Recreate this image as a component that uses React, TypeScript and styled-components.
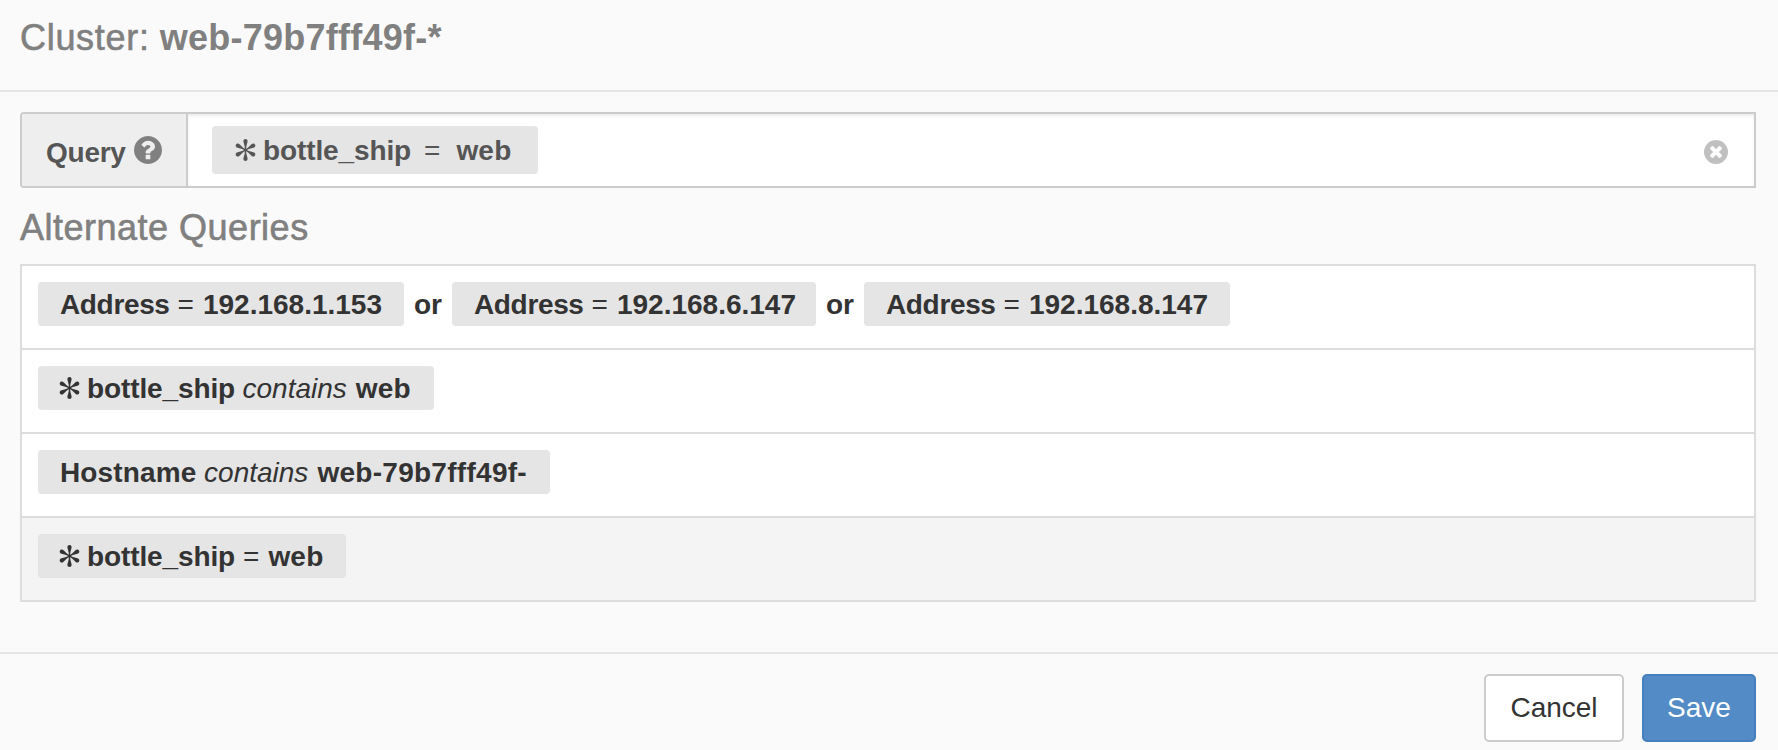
import React from 'react';
import styled, { createGlobalStyle } from 'styled-components';

const GlobalStyle = createGlobalStyle`
  *, *::before, *::after { box-sizing: border-box; }
  body {
    margin: 0;
    background: #fafafa;
    font-family: "Liberation Sans", Arial, sans-serif;
    font-size: 28px;
    color: #333;
  }
`;

const Dialog = styled.div`
  display: flex;
  flex-direction: column;
  height: 750px;
  overflow: hidden;
  background: #fafafa;
`;

const Header = styled.header`
  height: 92px;
  padding: 20px 20px 0;
  border-bottom: 2px solid #e5e5e5;
`;

const Title = styled.h1`
  display: flex;
  gap: 10px;
  margin: 0;
  font-size: 36px;
  line-height: 35px;
  font-weight: 400;
  color: #808080;
`;

const TitleLabel = styled.span`
  letter-spacing: 0.7px;
  -webkit-text-stroke: 0.6px #808080;
`;

const TitleName = styled.strong`
  letter-spacing: 0.25px;
`;

const Body = styled.main`
  height: 560px;
  padding: 20px 22px 0 20px;
`;

const QueryBar = styled.div`
  display: flex;
  height: 76px;
  border: 2px solid #ccc;
  border-radius: 4px 0 0 4px;
  background: #fff;
  color: #555;
`;

const QueryLabel = styled.label`
  display: flex;
  align-items: center;
  gap: 8px;
  width: 166px;
  padding-left: 24px;
  border-right: 2px solid #ccc;
  border-radius: 2px 0 0 2px;
  background: #eee;
  font-weight: 700;
`;

const LabelText = styled.span`
  padding-top: 5px;
  letter-spacing: -0.25px;
`;

const QueryInput = styled.div`
  flex: 1;
  display: flex;
  align-items: flex-start;
  justify-content: space-between;
  padding: 12px 26px 0 24px;
  box-shadow: inset 0 2px 3px rgba(0, 0, 0, 0.075);
`;

const ClearButton = styled.button`
  display: flex;
  margin: 14px 0 0;
  padding: 0;
  border: 0;
  background: none;
  color: #c0c0c0;
`;

const SectionTitle = styled.h2`
  margin: 22px 0 19px;
  font-size: 36px;
  line-height: 35px;
  font-weight: 400;
  letter-spacing: 0.5px;
  color: #808080;
  -webkit-text-stroke: 0.6px #808080;
`;

const QueryList = styled.ul`
  margin: 0;
  padding: 0;
  list-style: none;
  border: solid #ddd;
  border-width: 0 2px 2px;
`;

const QueryRow = styled.li<{ $selected?: boolean }>`
  display: flex;
  align-items: flex-start;
  height: 84px;
  padding: 16px 16px 0;
  border-top: 2px solid #ddd;
  background: ${(p) => (p.$selected ? '#f4f4f4' : '#fff')};
`;

const Pill = styled.span<{ $width: number; $large?: boolean }>`
  display: flex;
  flex: none;
  gap: 8px;
  width: ${(p) => p.$width}px;
  height: ${(p) => (p.$large ? 48 : 44)}px;
  line-height: ${(p) => (p.$large ? 49 : 45)}px;
  padding-left: ${(p) => (p.$large ? 24 : 22)}px;
  border-radius: 4px;
  background: #e5e5e5;
  white-space: nowrap;
`;

const Term = styled.strong<{ $tracking?: number }>`
  letter-spacing: ${(p) => p.$tracking ?? 0}px;
`;

const Equals = styled.span<{ $spaced?: boolean }>`
  margin: ${(p) => (p.$spaced ? '0 8px 0 5px' : '0 1px 0 0')};
`;

const Contains = styled.em`
  margin-left: -0.5px;
  margin-right: 1px;
`;

const Or = styled.strong`
  width: 48px;
  padding-left: 10px;
  line-height: 45px;
`;

const StarIcon = styled.svg<{ $top: number }>`
  flex: none;
  width: 19px;
  height: 22px;
  margin-top: ${(p) => p.$top}px;
  overflow: visible;
`;

const Footer = styled.footer`
  display: flex;
  justify-content: flex-end;
  align-items: flex-start;
  gap: 18px;
  height: 98px;
  padding: 20px 22px 0;
  border-top: 2px solid #e5e5e5;
`;

const Button = styled.button<{ $primary?: boolean }>`
  width: ${(p) => (p.$primary ? 114 : 140)}px;
  height: 68px;
  padding: 0;
  border: 2px solid ${(p) => (p.$primary ? '#467fbd' : '#ccc')};
  border-radius: 5px;
  background: ${(p) => (p.$primary ? '#528bc6' : '#fff')};
  color: ${(p) => (p.$primary ? '#fff' : '#333')};
  font: inherit;
`;

const DISC = 'm384 192q0 209-103 385.5t-279.5 279.5-385.5 103-385.5-103-279.5-279.5-103-385.5 103-385.5 279.5-279.5 385.5-103 385.5 103 279.5 279.5 103 385.5z';

const HelpIcon = () => (
  <svg width="28" height="28" viewBox="0 128 1536 1536" fill="#808080">
    <path
      d={
        'M896 1376v-192q0-14-9-23t-23-9h-192q-14 0-23 9t-9 23v192q0 14 9 23t23 9h192q14 0 23-9t9-23zm256-672q0-88-55.5-163t-138.5-116-170-41q-243 0-371 213-15 24 8 42l132 100q7 6 19 6 16 0 25-12 53-68 86-92 34-24 86-24 48 0 85.5 26t37.5 59q0 38-20 61t-68 45q-63 28-115.5 86.5t-52.5 125.5v36q0 14 9 23t23 9h192q14 0 23-9t9-23q0-19 21.5-49.5t54.5-49.5q32-18 49-28.5t46-35 44.5-48 28-60.5 12.5-81z' +
        DISC
      }
    />
  </svg>
);

const ClearIcon = () => (
  <svg width="24" height="24" viewBox="0 128 1536 1536" fill="currentColor">
    <path d="M1149 1122q0-26-19-45l-181-181 181-181q19-19 19-45 0-27-19-46l-90-90q-19-19-46-19-26 0-45 19l-181 181-181-181q-19-19-45-19-27 0-46 19l-90 90q-19 19-19 46 0 26 19 45l181 181-181 181q-19 19-19 45 0 27 19 46l90 90q19 19 46 19 26 0 45-19l181-181 181 181q19 19 45 19 27 0 46-19l90-90q19-19 19-46zm387-226q0 209-103 385.5t-279.5 279.5-385.5 103-385.5-103-279.5-279.5-103-385.5 103-385.5 279.5-279.5 385.5-103 385.5 103 279.5 279.5 103 385.5z" />
  </svg>
);

const Star = ({ top }: { top: number }) => (
  <StarIcon $top={top} viewBox="-9.5 -11 19 22" fill="currentColor">
    {[0, 60, 120, 180, 240, 300].map((angle) => (
      <path
        key={angle}
        transform={`rotate(${angle})`}
        d="M-0.7 0L-0.8 -3.5L-2 -8C-2.6 -10 -1.2 -11 0 -11S2.6 -10 2 -8L0.8 -3.5L0.7 0Z"
      />
    ))}
  </StarIcon>
);

const addresses = [
  { value: '192.168.1.153', width: 366 },
  { value: '192.168.6.147', width: 364 },
  { value: '192.168.8.147', width: 366 },
];

const BottleShip = ({ iconTop = 11 }: { iconTop?: number }) => (
  <>
    <Star top={iconTop} />
    <Term $tracking={-0.12}>bottle_ship</Term>
  </>
);

export default function App() {
  return (
    <Dialog>
      <GlobalStyle />
      <Header>
        <Title>
          <TitleLabel>Cluster:</TitleLabel>
          <TitleName>web-79b7fff49f-*</TitleName>
        </Title>
      </Header>
      <Body>
        <QueryBar>
          <QueryLabel>
            <LabelText>Query</LabelText>
            <HelpIcon />
          </QueryLabel>
          <QueryInput>
            <Pill $width={326} $large>
              <BottleShip iconTop={13} />
              <Equals $spaced>=</Equals>
              <Term $tracking={0.2}>web</Term>
            </Pill>
            <ClearButton aria-label="Clear query">
              <ClearIcon />
            </ClearButton>
          </QueryInput>
        </QueryBar>
        <SectionTitle>Alternate Queries</SectionTitle>
        <QueryList>
          <QueryRow>
            {addresses.map(({ value, width }, i) => (
              <React.Fragment key={value}>
                {i > 0 && <Or>or</Or>}
                <Pill $width={width}>
                  <Term $tracking={-0.35}>Address</Term>
                  <Equals>=</Equals>
                  <Term>{value}</Term>
                </Pill>
              </React.Fragment>
            ))}
          </QueryRow>
          <QueryRow>
            <Pill $width={396}>
              <BottleShip />
              <Contains>contains</Contains>
              <Term $tracking={0.2}>web</Term>
            </Pill>
          </QueryRow>
          <QueryRow>
            <Pill $width={512}>
              <Term $tracking={0.15}>Hostname</Term>
              <Contains>contains</Contains>
              <Term $tracking={0.28}>web-79b7fff49f-</Term>
            </Pill>
          </QueryRow>
          <QueryRow $selected>
            <Pill $width={308}>
              <BottleShip />
              <Equals>=</Equals>
              <Term $tracking={0.2}>web</Term>
            </Pill>
          </QueryRow>
        </QueryList>
      </Body>
      <Footer>
        <Button>Cancel</Button>
        <Button $primary>Save</Button>
      </Footer>
    </Dialog>
  );
}
